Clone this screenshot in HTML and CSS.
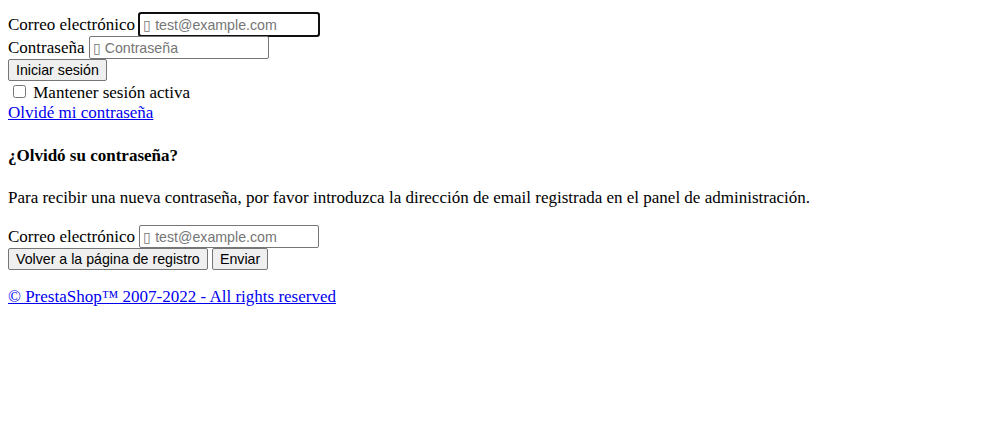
FILE: index.html
```html
<!DOCTYPE html>
<html lang="es">
<head>
<meta charset="utf-8">
<title>PrestaShop</title>
<link rel="stylesheet" href="styles.css">
</head>
<body>
<form class="login">
  <div class="row"><label for="email">Correo electrónico</label> <input class="field focused" id="email" type="email" placeholder="▯ test@example.com"></div>
  <div class="row"><label for="passwd">Contraseña</label> <input class="field" id="passwd" type="password" placeholder="▯ Contraseña"></div>
  <div class="row"><button class="btn" type="button">Iniciar sesión</button></div>
  <div class="row"><input class="check" id="stay" type="checkbox"> <label for="stay">Mantener sesión activa</label></div>
  <div class="row"><a href="#forgot">Olvidé mi contraseña</a></div>
</form>
<form class="forgot" id="forgot">
  <h4 class="title">¿Olvidó su contraseña?</h4>
  <p class="desc">Para recibir una nueva contraseña, por favor introduzca la dirección de email registrada en el panel de administración.</p>
  <div class="row"><label for="email2">Correo electrónico</label> <input class="field" id="email2" type="email" placeholder="▯ test@example.com"></div>
  <div class="row"><button class="btn" type="button">Volver a la página de registro</button> <button class="btn" type="button">Enviar</button></div>
</form>
<p class="footer"><a href="#">© PrestaShop™ 2007-2022 - All rights reserved</a></p>
</body>
</html>
```
FILE: styles.css
```css
body {
  margin: 8px;
  font-family: "Liberation Serif", "Times New Roman", serif;
  font-size: 17px;
  color: #000;
  background: #fff;
}
form { margin: 0; }
.login { padding-top: 5px; }
a { color: #0000ee; }
.field, .btn {
  font-family: "Liberation Sans", Arial, sans-serif;
  font-size: 14.2px;
}
.field {
  width: 180px;
  box-sizing: border-box;
  height: 23px;
  padding: 1px 3px;
  margin: 0;
  border: 1px solid #767676;
  border-radius: 2px;
  vertical-align: baseline;
}
.field::placeholder { color: #757575; }
.focused {
  outline: 2px solid #101010;
  outline-offset: -1px;
  border-color: #101010;
}
.btn {
  box-sizing: border-box;
  height: 22px;
  margin: 0;
  padding: 1px 7px;
  border: 1px solid #767676;
  border-radius: 2px;
  background: #efefef;
  color: #000;
}
.check { margin: 4px 3px 4px 5px; }
.title { margin: 1.33em 0; font-size: 17px; }
.desc { margin: 17px 0; }
.footer { margin: 17px 0; }
```
